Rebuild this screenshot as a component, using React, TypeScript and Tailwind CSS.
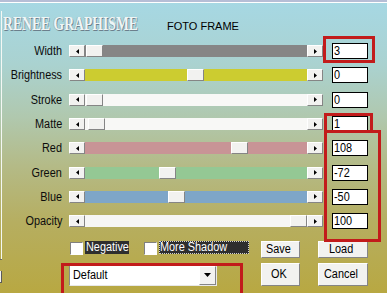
import type { ReactNode } from 'react';

interface SliderRow {
  label: string;
  value: string;
  track: string;
  thumb: number;
}

const rows: SliderRow[] = [
  { label: 'Width', value: '3', track: 'bg-[#868686]', thumb: 1 },
  { label: 'Brightness', value: '0', track: 'bg-[#cccc30]', thumb: 102 },
  { label: 'Stroke', value: '0', track: 'bg-[#f8f8f6]', thumb: 1 },
  { label: 'Matte', value: '1', track: 'bg-[#f8f8f6]', thumb: 3 },
  { label: 'Red', value: '108', track: 'bg-[#c89496]', thumb: 146 },
  { label: 'Green', value: '-72', track: 'bg-[#94c894]', thumb: 74 },
  { label: 'Blue', value: '-50', track: 'bg-[#7ea6c8]', thumb: 83 },
  { label: 'Opacity', value: '100', track: 'bg-[#f6f6f4]', thumb: 205 },
];

// narrow the sans text a bit, the original uses a bitmap dialog font
function Narrow({ children, right }: { children: ReactNode; right?: boolean }) {
  return (
    <span className={`inline-block whitespace-nowrap scale-x-[0.87] ${right ? 'origin-right' : 'origin-left'}`}>
      {children}
    </span>
  );
}

const raised =
  'border border-t-white border-l-white border-r-[#858585] border-b-[#858585] bg-[#f2f2f0]';

function ArrowBtn({ dir }: { dir: 'left' | 'right' }) {
  return (
    <div className={`flex h-full w-[16px] shrink-0 items-center justify-center ${raised}`}>
      <svg width="3" height="5" viewBox="0 0 3 5">
        <polygon points={dir === 'left' ? '3,0 3,5 0,2.5' : '0,0 0,5 3,2.5'} fill="#000" />
      </svg>
    </div>
  );
}

function Button({ label, w, h }: { label: string; w: string; h: string }) {
  return (
    <div className={`flex items-center justify-center ${w} ${h} ${raised} text-[12.5px] leading-[14px] text-black`}>
      <Narrow>{label}</Narrow>
    </div>
  );
}

function CheckBox() {
  return (
    <div className="h-[13px] w-[13px] border border-t-[#808080] border-l-[#808080] border-r-white border-b-white bg-white" />
  );
}

export default function App() {
  return (
    <div
      className="relative h-[293px] w-[387px] overflow-hidden bg-[linear-gradient(180deg,#a6d8e4_0%,#aad2d0_22%,#b0c8ae_40%,#b4ba86_57%,#b6ae60_76%,#b8a842_100%)] font-['Liberation_Sans',Arial,sans-serif] text-black"
    >
      <div className="h-[2px] bg-[#b6bed6]" />
      <div className="h-[1px] bg-white" />

      <div className="flex">
        {/* left edge of the window frame */}
        <div className="flex w-[2px] flex-col">
          <div className="mt-[8px] h-[248px] border-r border-r-[#f4f8f4]" />
          <div className="h-[1px] bg-[#6a6a6a]" />
          <div className="mt-[11px] h-[12px] border-r border-b border-r-[#5a5a5a] border-b-[#5a5a5a] bg-[#f4f4f0]" />
        </div>

        <div className="w-[385px]">
          {/* header */}
          <div className="flex h-[36px] items-start">
            <div className="mt-[10px] ml-[1px] w-[164px]">
              <span className="inline-block origin-left scale-x-[0.76] whitespace-nowrap font-['Liberation_Serif',serif] text-[18px] font-bold leading-[20px] text-[#eef6f6] [text-shadow:1px_1px_0_#6c7f8c,-1px_0_0_#9fb6bf]">
                RENEE GRAPHISME
              </span>
            </div>
            <div className="mt-[17px] text-[11px] leading-[12px]">FOTO FRAME</div>
          </div>

          {/* sliders */}
          {rows.map((r) => (
            <div key={r.label} className="flex h-[24.3px] items-center">
              <div className="w-[60px] text-right text-[12.5px] leading-[14px] text-[#0c0c0c]">
                <Narrow right>{r.label}</Narrow>
              </div>
              <div className="ml-[7px] flex h-[12px] w-[254px]">
                <ArrowBtn dir="left" />
                <div className={`relative h-full flex-1 ${r.track}`}>
                  <div className={`absolute top-0 h-full w-[17px] ${raised}`} style={{ left: `${r.thumb}px` }} />
                </div>
                <ArrowBtn dir="right" />
              </div>
              <div className="ml-[9px] h-[16px] w-[36px] border border-black bg-white pl-[1px] text-[12.5px] leading-[14px]">
                <Narrow>{r.value}</Narrow>
              </div>
            </div>
          ))}

          {/* options */}
          <div className="mt-[7.6px] flex h-[17px] items-start">
            <div className="mt-[1px] ml-[68px]">
              <CheckBox />
            </div>
            <div className="ml-[2px] h-[13px] w-[44px] bg-[#2e2e2e] pl-[1px] text-[12.5px] leading-[13px] text-white">
              <Narrow>Negative</Narrow>
            </div>
            <div className="mt-[1px] ml-[15px]">
              <CheckBox />
            </div>
            <div className="ml-[2px] h-[13px] w-[90px] border border-dotted border-[#d0d0d0] bg-[#2e2e2e] text-[12.5px] leading-[11px] text-white">
              <Narrow>More Shadow</Narrow>
            </div>
            <div className="ml-[12px]">
              <Button label="Save" w="w-[39px]" h="h-[17px]" />
            </div>
            <div className="ml-[18px]">
              <Button label="Load" w="w-[50px]" h="h-[17px]" />
            </div>
          </div>

          <div className="mt-[5px] flex h-[23px] items-start">
            <div className="mt-[2px] ml-[67px] flex h-[21px] w-[148px] border border-t-[#8a8a8a] border-l-[#8a8a8a] border-r-[#e8e8e8] border-b-[#e8e8e8] bg-white">
              <div className="flex-1 pl-[3px] text-[12.5px] leading-[19px]">
                <Narrow>Default</Narrow>
              </div>
              <div className={`flex h-full w-[17px] items-center justify-center ${raised}`}>
                <svg width="7" height="4" viewBox="0 0 7 4">
                  <polygon points="0,0 7,0 3.5,4" fill="#000" />
                </svg>
              </div>
            </div>
            <div className="ml-[44px]">
              <Button label="OK" w="w-[39px]" h="h-[23px]" />
            </div>
            <div className="ml-[18px]">
              <Button label="Cancel" w="w-[50px]" h="h-[23px]" />
            </div>
          </div>
        </div>
      </div>

      {/* red highlight marks */}
      <div className="absolute top-[36px] left-[323px] h-[27px] w-[52px] border-[3px] border-[#c21b1b]" />
      <div className="absolute top-[113px] left-[324px] h-[20px] w-[49px] border-[3px] border-[#c21b1b]" />
      <div className="absolute top-[130px] left-[324px] h-[112px] w-[57px] border-[3px] border-[#c21b1b]" />
      <div className="absolute top-[263px] left-[61px] h-[40px] w-[182px] border-[3px] border-[#c21b1b]" />
    </div>
  );
}
